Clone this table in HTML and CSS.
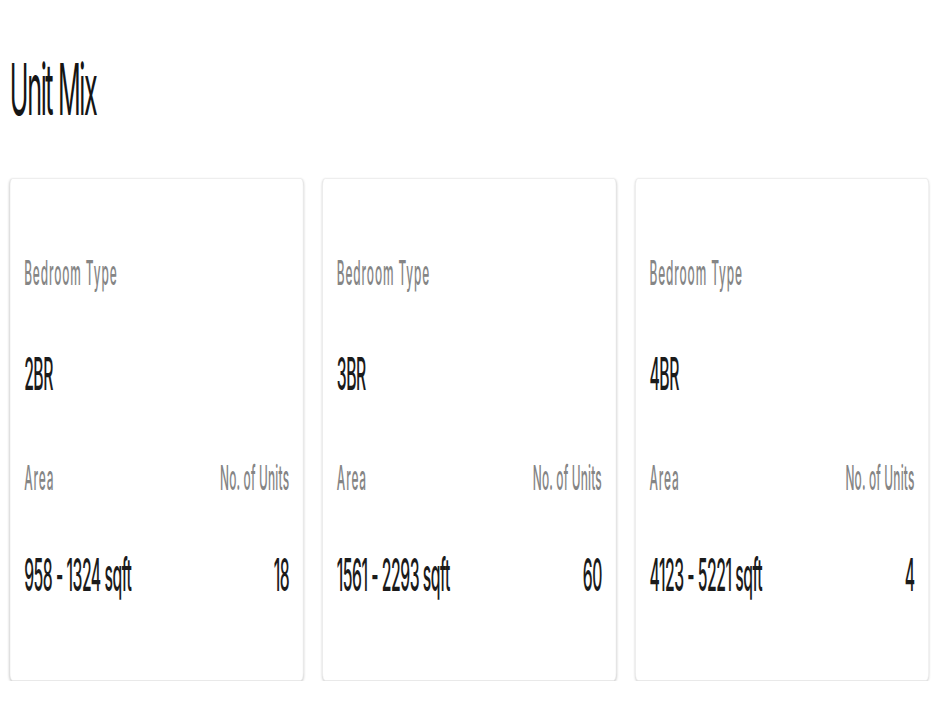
FILE: index.html
```html
<!DOCTYPE html>
<html lang="en">
<head>
<meta charset="utf-8">
<title>Unit Mix</title>
<link rel="stylesheet" href="styles.css">
</head>
<body>
<div class="viewport">
  <main class="page">
    <h1 class="title">Unit Mix</h1>
    <section class="cards">
      <article class="card">
        <div class="type">
          <div class="label">Bedroom Type</div>
          <div class="value">2BR</div>
        </div>
        <div class="stats">
          <div class="label">Area</div>
          <div class="label right">No. of Units</div>
          <div class="value">958 - 1324 sqft</div>
          <div class="value right">18</div>
        </div>
      </article>
      <article class="card">
        <div class="type">
          <div class="label">Bedroom Type</div>
          <div class="value">3BR</div>
        </div>
        <div class="stats">
          <div class="label">Area</div>
          <div class="label right">No. of Units</div>
          <div class="value">1561 - 2293 sqft</div>
          <div class="value right">60</div>
        </div>
      </article>
      <article class="card">
        <div class="type">
          <div class="label">Bedroom Type</div>
          <div class="value">4BR</div>
        </div>
        <div class="stats">
          <div class="label">Area</div>
          <div class="label right">No. of Units</div>
          <div class="value">4123 - 5221 sqft</div>
          <div class="value right">4</div>
        </div>
      </article>
    </section>
  </main>
</div>
</body>
</html>
```
FILE: styles.css
```css
html, body {
  margin: 0;
  padding: 0;
  background: #ffffff;
}

.viewport {
  width: 943px;
  overflow: hidden;
}

/* The page is laid out wide and compressed horizontally */
.page {
  width: 2694px;
  box-sizing: border-box;
  padding: 53px 40px 0 28px;
  transform: scaleX(0.35);
  transform-origin: 0 0;
  font-family: "Inter", "Noto Sans", sans-serif;
  color: #1c1c1c;
}

.title {
  margin: 0 0 53px 0;
  font-size: 72px;
  line-height: 1;
  font-weight: 400;
  letter-spacing: -4px;
  color: #151515;
}

.cards {
  display: grid;
  grid-template-columns: repeat(3, 1fr);
  gap: 54px;
}

.card {
  background: #fff;
  border: 1px solid #e8e8e8;
  border-radius: 8px;
  box-shadow: 0 1px 4px rgba(0, 0, 0, 0.2);
  padding: 77px 40px 83px;
  display: flex;
  flex-direction: column;
  gap: 65px;
}

.type {
  display: flex;
  flex-direction: column;
  gap: 61px;
}

.stats {
  display: grid;
  grid-template-columns: 1fr auto;
  row-gap: 57px;
}

.label {
  font-size: 34px;
  line-height: 1;
  font-weight: 500;
  letter-spacing: 2.5px;
  color: #858585;
}

.label.right {
  letter-spacing: 0.5px;
}

.value {
  font-size: 45px;
  line-height: 1;
  font-weight: 500;
  letter-spacing: -1.4px;
  color: #1b1b1b;
}

.right {
  text-align: right;
}
```
